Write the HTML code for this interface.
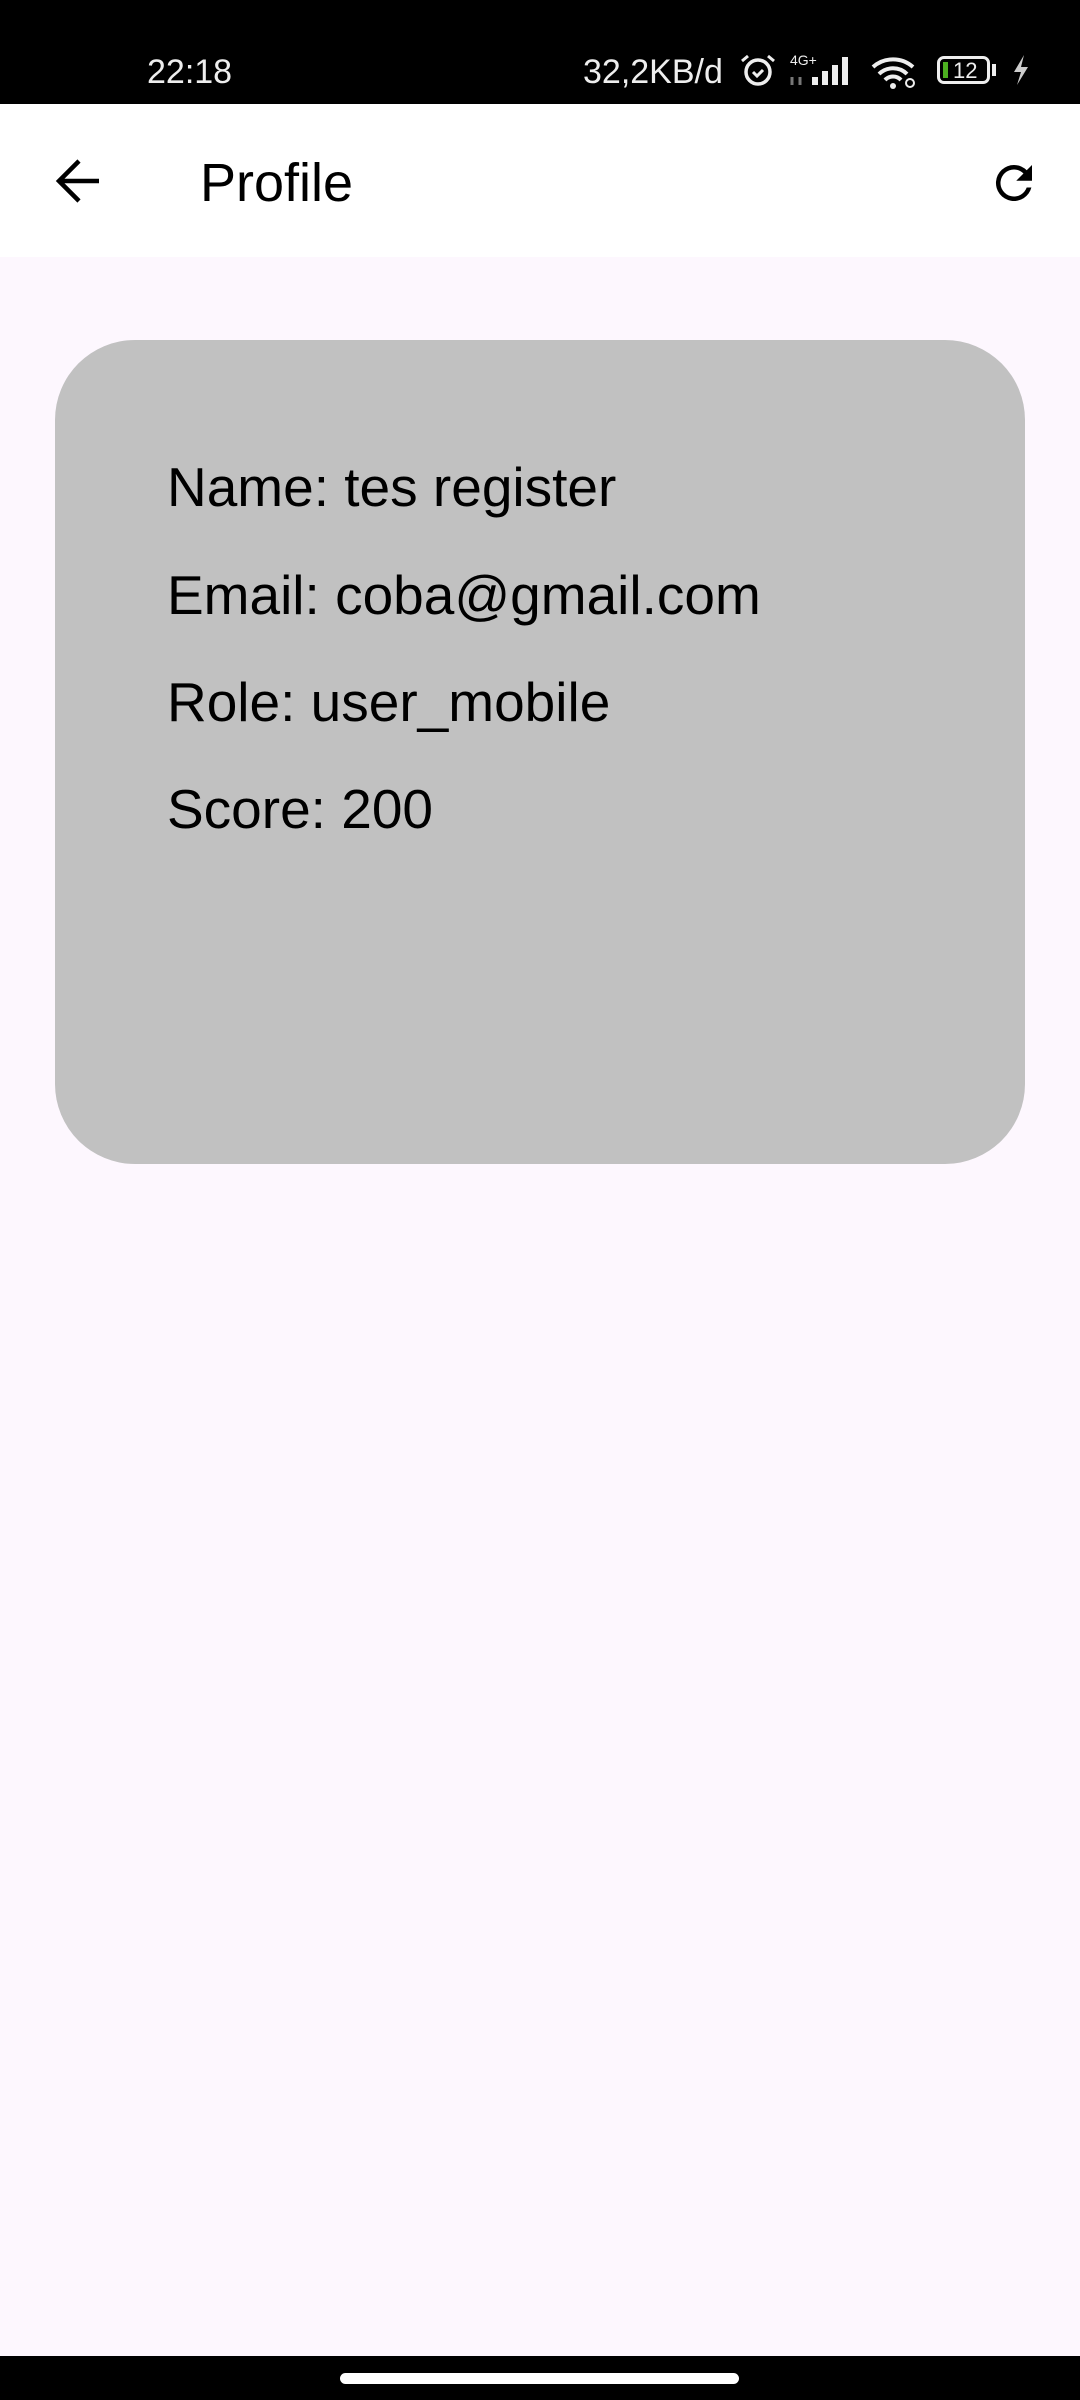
<!DOCTYPE html>
<html><head><meta charset="utf-8"><style>
*{margin:0;padding:0;box-sizing:border-box}
body{width:1080px;height:2400px;background:#fdf7fe;font-family:"Liberation Sans",sans-serif;position:relative;overflow:hidden}
.sb{position:absolute;left:0;top:0;width:1080px;height:104px;background:#000;color:#eee}
.t{position:absolute;font-size:34px;line-height:1;white-space:nowrap}
.ab{position:absolute;left:0;top:104px;width:1080px;height:153px;background:#fff}
.card{position:absolute;left:55px;top:340px;width:970px;height:824px;background:#c1c1c1;border-radius:80px}
.l{position:absolute;left:167px;font-size:55px;color:#000;line-height:1;white-space:nowrap}
.nav{position:absolute;left:0;top:2356px;width:1080px;height:44px;background:#000}
.pill{position:absolute;left:340px;top:2373px;width:399px;height:11px;background:#fff;border-radius:6px}
</style></head><body>
<div class="sb">
<div class="t" style="left:147px;top:55px">22:18</div>
<div class="t" style="left:583px;top:55px">32,2KB/d</div>
<svg style="position:absolute;left:738px;top:52px" width="40" height="36" viewBox="0 0 40 36"><circle cx="20" cy="20" r="12" fill="none" stroke="#eee" stroke-width="3.5"/><path d="M15 20l4 4 6-6" fill="none" stroke="#eee" stroke-width="3"/><path d="M4 9l6-5M36 9l-6-5" stroke="#eee" stroke-width="3"/></svg>
<div class="t" style="left:790px;top:53px;font-size:14px">4G+</div>
<svg style="position:absolute;left:790px;top:55px" width="70" height="32" viewBox="0 0 70 32"><rect x="22" y="22" width="6" height="8" fill="#eee"/><rect x="32" y="16" width="6" height="14" fill="#eee"/><rect x="42" y="10" width="6" height="20" fill="#eee"/><rect x="52" y="2" width="6" height="28" fill="#eee"/><path d="M2 30v-8M10 30v-8" stroke="#777" stroke-width="3"/></svg>
<svg style="position:absolute;left:870px;top:55px" width="50" height="34" viewBox="0 0 50 34"><path d="M3 12a30 30 0 0 1 40 0M9 19a20 20 0 0 1 28 0M15 25a11 11 0 0 1 16 0" fill="none" stroke="#eee" stroke-width="4"/><circle cx="23" cy="31" r="3" fill="#eee"/><circle cx="40" cy="28" r="4" fill="none" stroke="#eee" stroke-width="2"/></svg>
<div style="position:absolute;left:937px;top:56px;width:53px;height:28px;border:3px solid #eee;border-radius:7px"></div>
<div style="position:absolute;left:943px;top:62px;width:5px;height:16px;background:#4caf20"></div>
<div class="t" style="left:953px;top:60px;font-size:22px">12</div>
<div style="position:absolute;left:992px;top:64px;width:4px;height:12px;background:#eee"></div>
<svg style="position:absolute;left:1010px;top:55px" width="22" height="30" viewBox="0 0 22 30"><path d="M14 0L4 17h7L7 30 18 12h-7z" fill="#ccc"/></svg>
</div>
<div class="ab">
<svg style="position:absolute;left:55px;top:55px" width="44" height="44" viewBox="0 0 44 44"><path d="M44 22H4M24 2L4 22l20 20" fill="none" stroke="#000" stroke-width="4.5"/></svg>
<div class="t" style="left:200px;top:52px;font-size:54px;color:#000">Profile</div>
<svg style="position:absolute;left:987px;top:52px" width="54" height="54" viewBox="0 0 24 24"><path d="M17.65 6.35A7.96 7.96 0 0 0 12 4a8 8 0 1 0 7.73 10h-2.08A6 6 0 1 1 12 6c1.66 0 3.14.69 4.22 1.78L13 11h7V4z" fill="#000"/></svg>
</div>
<div class="card"></div>
<div class="l" style="top:460px">Name: tes register</div>
<div class="l" style="top:568px">Email: coba@gmail.com</div>
<div class="l" style="top:675px">Role: user_mobile</div>
<div class="l" style="top:782px">Score: 200</div>
<div class="nav"></div><div class="pill"></div>
</body></html>
